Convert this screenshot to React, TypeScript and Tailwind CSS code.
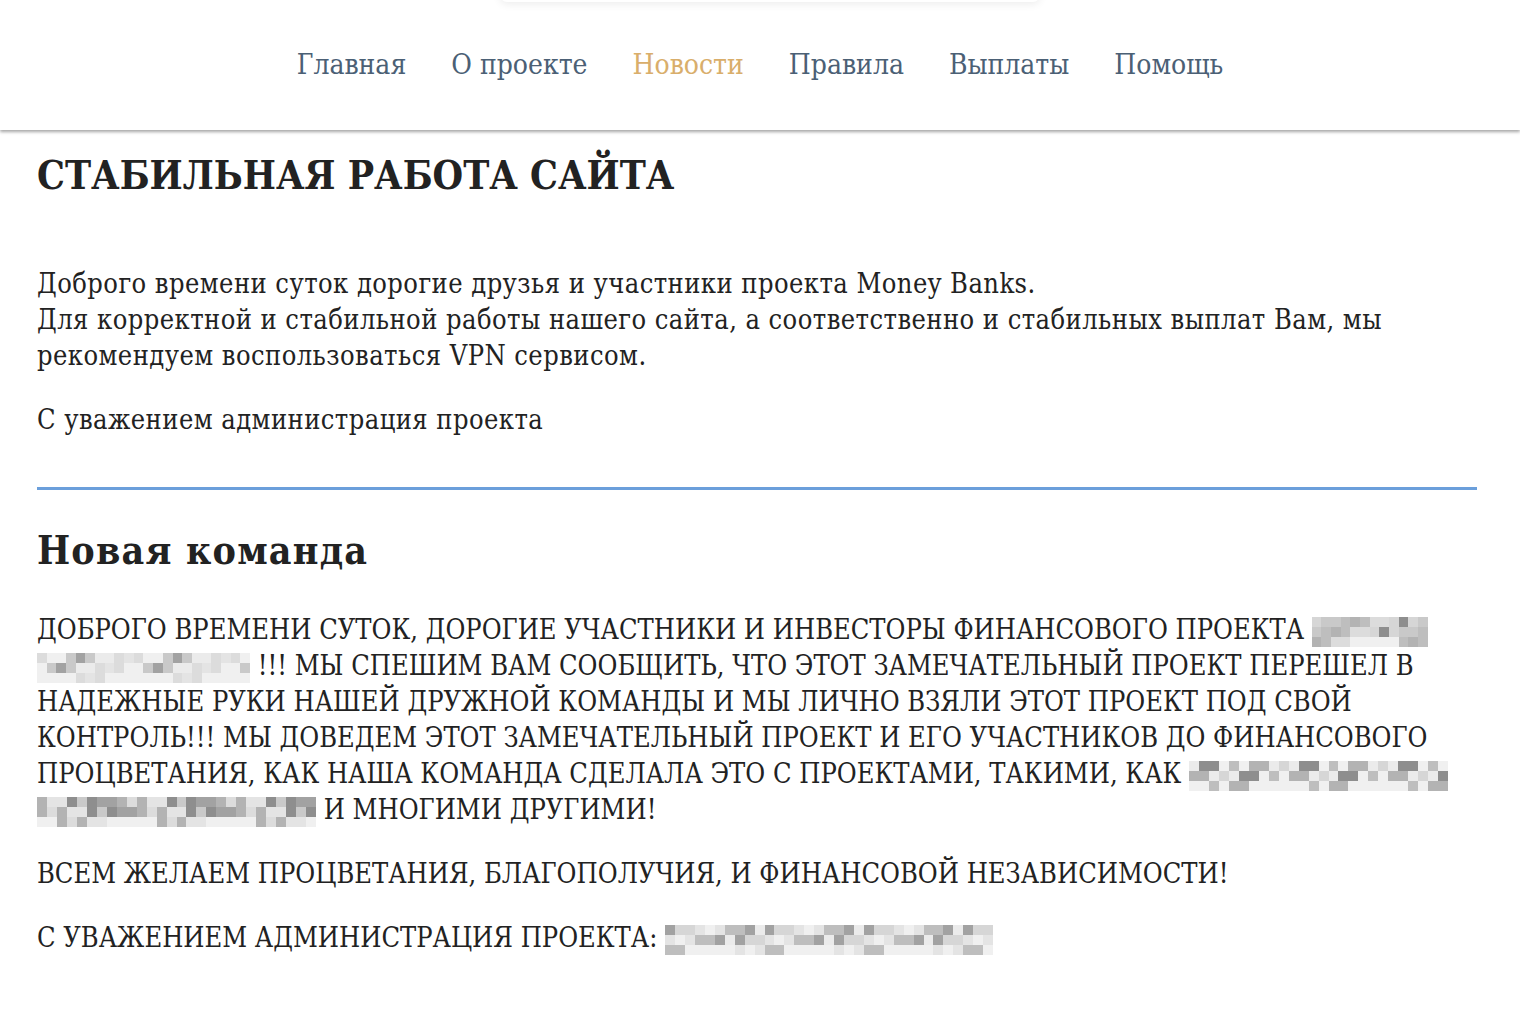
import React from "react";

const NAV_LINKS = [
  { label: "Главная", active: false },
  { label: "О проекте", active: false },
  { label: "Новости", active: true },
  { label: "Правила", active: false },
  { label: "Выплаты", active: false },
  { label: "Помощь", active: false },
];

const SHADES = [
  "bg-[#e4e4e4]",
  "bg-[#c9c9c9]",
  "bg-[#b3b3b3]",
  "bg-[#d6d6d6]",
  "bg-[#f0f0f0]",
  "bg-[#a2a2a2]",
  "bg-[#dcdcdc]",
  "bg-[#8e8e8e]",
  "bg-[#bebebe]",
  "bg-[#ebebeb]",
];

// pixelated "redacted" block, like the censored names in the screenshot
function Mosaic({ cols, seed, className }: { cols: number; seed: number; className: string }) {
  const cells = Array.from({ length: cols * 3 }, (_, i) => {
    const row = Math.floor(i / cols);
    let idx = (i * 7 + seed * 13 + ((i * i) % 5)) % SHADES.length;
    if (row === 2 && idx % 2 === 1) idx = 4;
    return SHADES[idx];
  });
  return (
    <span
      className={`inline-grid h-[30px] align-middle ${className}`}
      style={{ gridTemplateColumns: `repeat(${cols}, 1fr)` }}
    >
      {cells.map((c, i) => (
        <span key={i} className={c} />
      ))}
    </span>
  );
}

export default function App() {
  return (
    <div className="min-h-screen bg-white font-['DejaVu_Serif_Condensed','Liberation_Serif',serif] text-[#222222]">
      <header className="relative z-10 flex h-[130px] items-center justify-center bg-white shadow-[0_2px_3px_rgba(0,0,0,0.35)]">
        <div className="absolute left-[500px] top-[-12px] h-[14px] w-[540px] rounded-full bg-white shadow-[0_2px_8px_rgba(0,0,0,0.08)]" />
        <nav className="flex items-center gap-[45px] text-[28px] leading-none">
          {NAV_LINKS.map((link) => (
            <a
              key={link.label}
              href="#"
              className={link.active ? "text-[#d9ae6b]" : "text-[#4b6075]"}
            >
              {link.label}
            </a>
          ))}
        </nav>
      </header>

      <main className="w-[1477px] pl-[37px] text-[27px] leading-[36px]">
        <h2 className="mt-[21px] text-[39px] font-bold leading-[48px]">СТАБИЛЬНАЯ РАБОТА САЙТА</h2>
        <p className="mt-[67px] tracking-[0.45px]">
          Доброго времени суток дорогие друзья и участники проекта Money Banks.
          <br />
          Для корректной и стабильной работы нашего сайта, а соответственно и стабильных выплат Вам, мы
          <br />
          рекомендуем воспользоваться VPN сервисом.
        </p>
        <p className="mt-[28px] tracking-[0.45px]">С уважением администрация проекта</p>

        <hr className="mt-[49px] h-[3px] border-0 bg-[#6b9fdb]" />

        <h2 className="mt-[36px] text-[39px] font-bold leading-[48px] tracking-[1.2px]">Новая команда</h2>
        <p className="mt-[38px] whitespace-nowrap">
          ДОБРОГО ВРЕМЕНИ СУТОК, ДОРОГИЕ УЧАСТНИКИ И ИНВЕСТОРЫ ФИНАНСОВОГО ПРОЕКТА{" "}
          <Mosaic cols={12} seed={1} className="w-[116px]" />
          <br />
          <Mosaic cols={22} seed={2} className="w-[213px]" /> !!! МЫ СПЕШИМ ВАМ СООБЩИТЬ, ЧТО ЭТОТ ЗАМЕЧАТЕЛЬНЫЙ ПРОЕКТ ПЕРЕШЕЛ В
          <br />
          НАДЕЖНЫЕ РУКИ НАШЕЙ ДРУЖНОЙ КОМАНДЫ И МЫ ЛИЧНО ВЗЯЛИ ЭТОТ ПРОЕКТ ПОД СВОЙ
          <br />
          КОНТРОЛЬ!!! МЫ ДОВЕДЕМ ЭТОТ ЗАМЕЧАТЕЛЬНЫЙ ПРОЕКТ И ЕГО УЧАСТНИКОВ ДО ФИНАНСОВОГО
          <br />
          ПРОЦВЕТАНИЯ, КАК НАША КОМАНДА СДЕЛАЛА ЭТО С ПРОЕКТАМИ, ТАКИМИ, КАК{" "}
          <Mosaic cols={26} seed={3} className="w-[259px]" />
          <br />
          <Mosaic cols={28} seed={4} className="w-[279px]" /> И МНОГИМИ ДРУГИМИ!
        </p>
        <p className="mt-[28px] whitespace-nowrap">
          ВСЕМ ЖЕЛАЕМ ПРОЦВЕТАНИЯ, БЛАГОПОЛУЧИЯ, И ФИНАНСОВОЙ НЕЗАВИСИМОСТИ!
        </p>
        <p className="mt-[28px] whitespace-nowrap">
          С УВАЖЕНИЕМ АДМИНИСТРАЦИЯ ПРОЕКТА: <Mosaic cols={33} seed={5} className="w-[328px]" />
        </p>
      </main>
    </div>
  );
}
